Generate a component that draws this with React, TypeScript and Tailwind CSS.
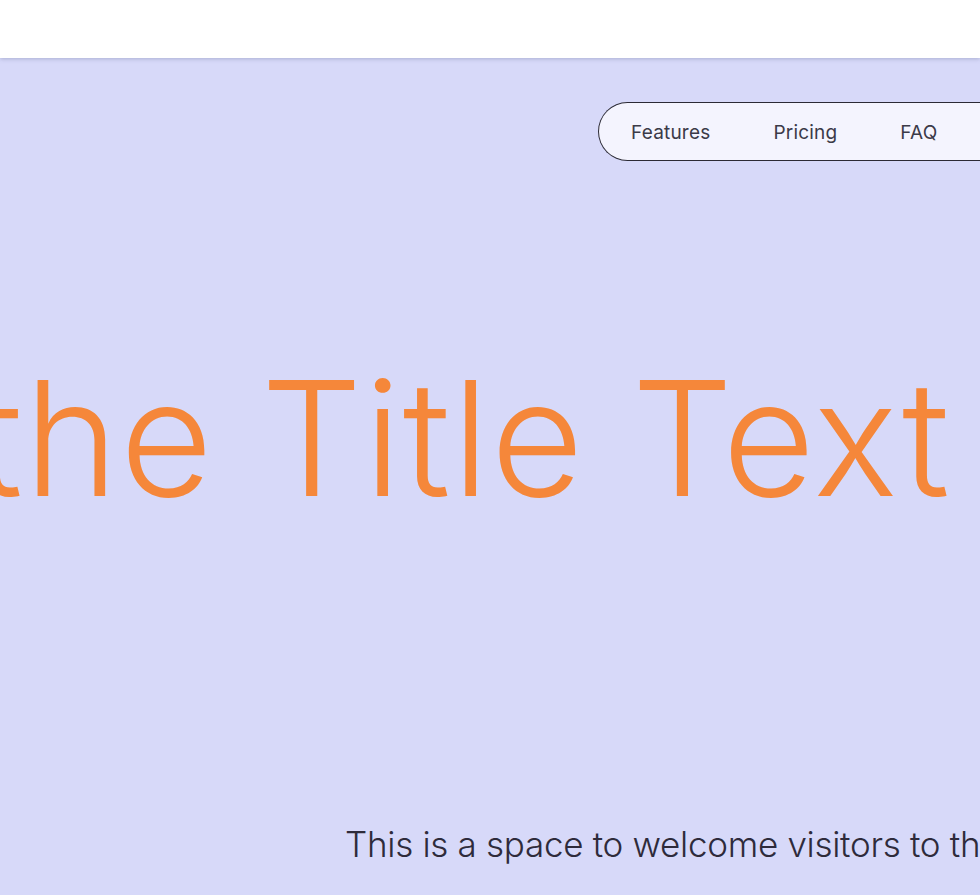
export default function App() {
  return (
    <div className="h-[895px] w-[980px] overflow-hidden bg-[#d7d9f9]">
      <header className="relative z-10 h-[58px] bg-white shadow-[0_1px_4px_rgba(90,96,140,0.35)]" />

      <div className="flex pl-[598px] pt-[44px]">
        <nav className="flex h-[59px] flex-1 items-center gap-[63px] rounded-l-full border border-r-0 border-[#2b2a35] bg-[#f4f4fe] pl-[32px] pt-[3px] font-['Inter',sans-serif] text-[19px] tracking-[0.2px] text-[#3b3a48]">
          <span>Features</span>
          <span>Pricing</span>
          <span>FAQ</span>
        </nav>
      </div>

      <h1 className="ml-[-25px] mt-[197px] whitespace-nowrap font-['Inter',sans-serif] text-[160px] font-light leading-[1] tracking-[1.5px] text-[#f5873a]">
        the Title Text
      </h1>

      <p className="ml-[345px] mt-[300px] whitespace-nowrap font-['Inter',sans-serif] text-[35px] font-light tracking-[-0.3px] text-[#2e2b3b]">
        This is a space to welcome visitors to the site.
      </p>
    </div>
  );
}
